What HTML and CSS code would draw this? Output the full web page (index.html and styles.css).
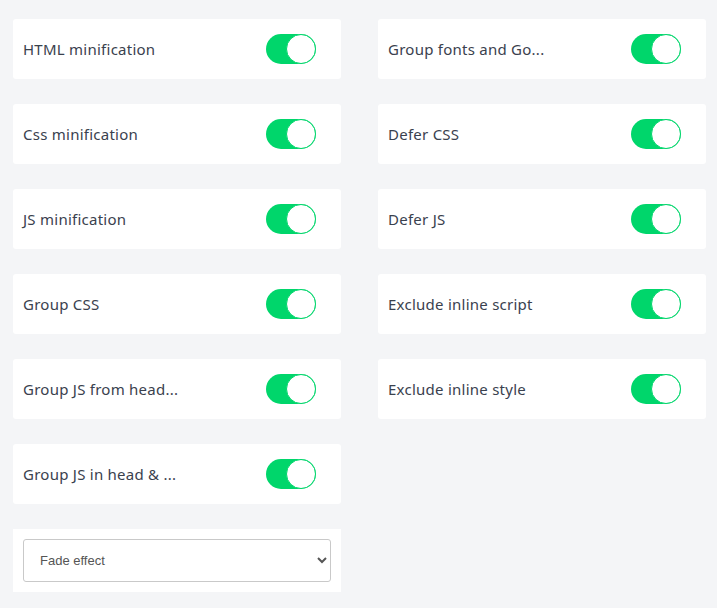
FILE: index.html
```html
<!DOCTYPE html>
<html>
<head>
<title>Optimization settings</title>
<link rel="stylesheet" href="styles.css">
</head>
<body>

<div class="settings">

<div class="column">

<div class="option">
<span class="label">HTML minification</span>
<label class="switch"><input type="checkbox" checked><span class="slider"></span></label>
</div>

<div class="option">
<span class="label">Css minification</span>
<label class="switch"><input type="checkbox" checked><span class="slider"></span></label>
</div>

<div class="option">
<span class="label">JS minification</span>
<label class="switch"><input type="checkbox" checked><span class="slider"></span></label>
</div>

<div class="option">
<span class="label">Group CSS</span>
<label class="switch"><input type="checkbox" checked><span class="slider"></span></label>
</div>

<div class="option">
<span class="label" title="Group JS from header">Group JS from head...</span>
<label class="switch"><input type="checkbox" checked><span class="slider"></span></label>
</div>

<div class="option">
<span class="label" title="Group JS in head &amp; footer">Group JS in head &amp; ...</span>
<label class="switch"><input type="checkbox" checked><span class="slider"></span></label>
</div>

<div class="option selectbox">
<select class="effect">
<option>Fade effect</option>
<option>Slide effect</option>
<option>No effect</option>
</select>
</div>

</div>

<div class="column">

<div class="option">
<span class="label" title="Group fonts and Google fonts">Group fonts and Go...</span>
<label class="switch"><input type="checkbox" checked><span class="slider"></span></label>
</div>

<div class="option">
<span class="label">Defer CSS</span>
<label class="switch"><input type="checkbox" checked><span class="slider"></span></label>
</div>

<div class="option">
<span class="label">Defer JS</span>
<label class="switch"><input type="checkbox" checked><span class="slider"></span></label>
</div>

<div class="option">
<span class="label">Exclude inline script</span>
<label class="switch"><input type="checkbox" checked><span class="slider"></span></label>
</div>

<div class="option">
<span class="label">Exclude inline style</span>
<label class="switch"><input type="checkbox" checked><span class="slider"></span></label>
</div>

</div>

</div>

</body>
</html>
```

FILE: styles.css
```css
body{
margin:0;
background:#f4f5f7;
font-family:"Noto Sans",sans-serif;
color:#3a414e;
}

.settings{
display:flex;
gap:37px;
padding:19px 11px 0 13px;
align-items:flex-start;
}

.column{
width:328px;
display:flex;
flex-direction:column;
gap:25px;
}

.option{
background:white;
border-radius:3px;
height:60px;
padding:0 25px 0 10px;
display:flex;
align-items:center;
justify-content:space-between;
box-sizing:border-box;
}

.label{
font-size:15px;
letter-spacing:0.25px;
white-space:nowrap;
}

.switch{
position:relative;
width:50px;
height:30px;
display:inline-block;
}

.switch input{
opacity:0;
width:0;
height:0;
}

.slider{
position:absolute;
inset:0;
background:#00d66b;
border-radius:15px;
cursor:pointer;
}

.slider:before{
content:"";
position:absolute;
right:0;
top:0;
width:28px;
height:28px;
border:1px solid #00d66b;
border-radius:50%;
background:white;
}

.selectbox{
height:63px;
border-radius:0;
padding:10px;
}

.effect{
width:100%;
height:43px;
border:1px solid #c9c9c9;
border-radius:3px;
background:white;
padding:0 12px;
font-family:"Liberation Sans",Arial,sans-serif;
font-size:13px;
color:#555;
}
```
